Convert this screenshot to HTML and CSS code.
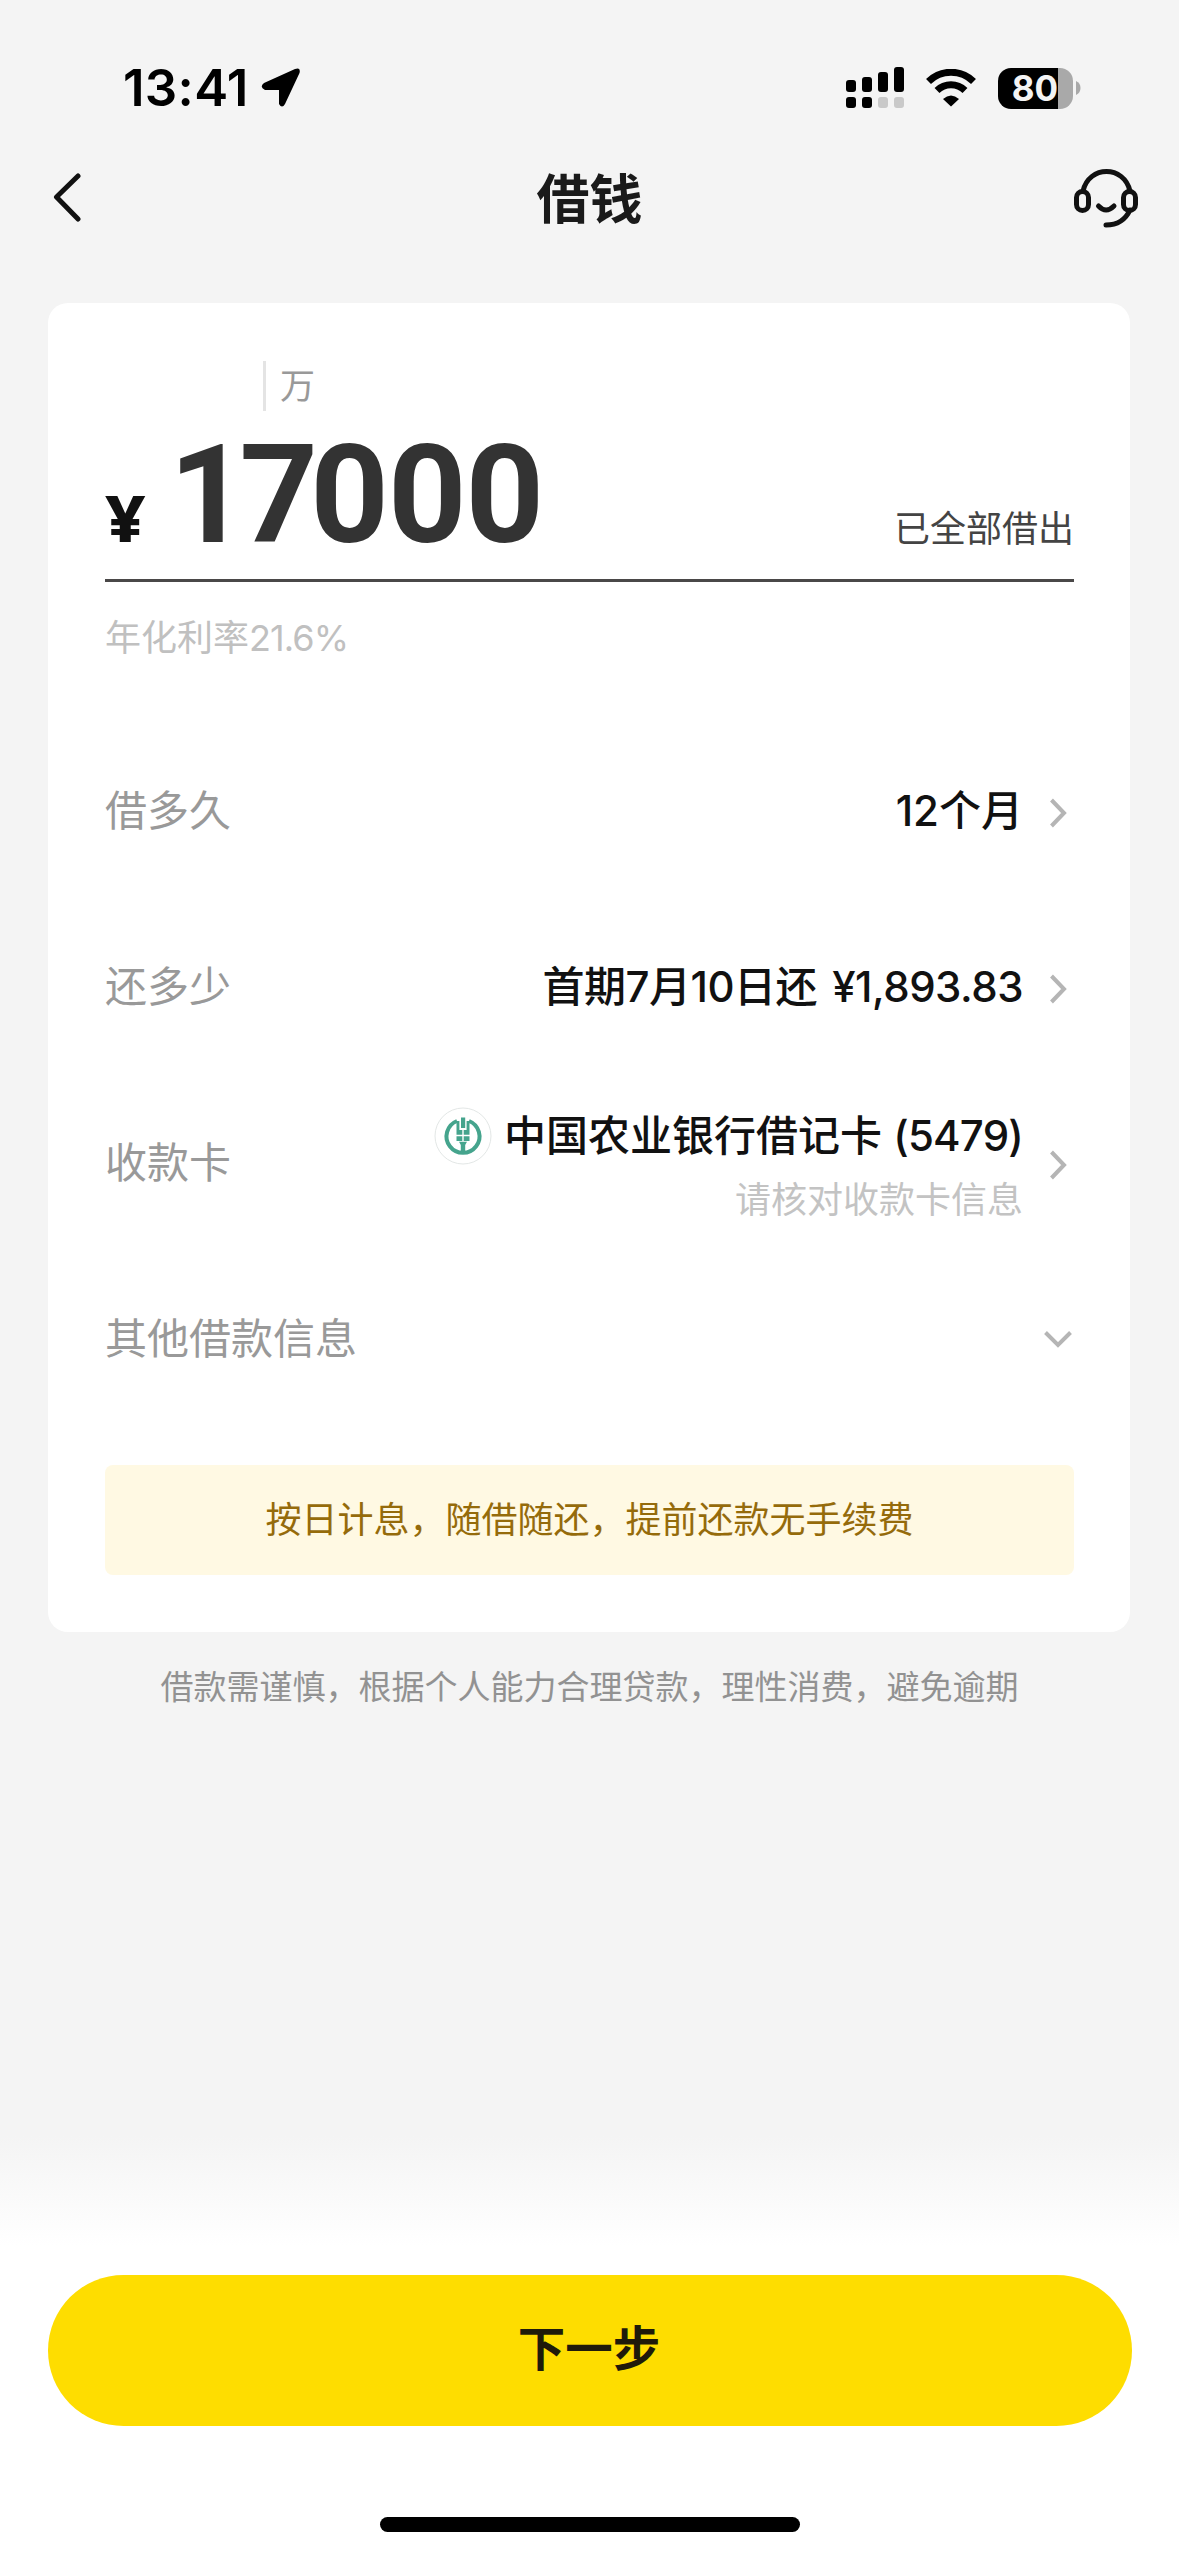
FILE: index.html
```html
<!DOCTYPE html>
<html lang="zh-CN">
<head>
<meta charset="utf-8">
<title>借钱</title>
<link rel="stylesheet" href="styles.css">
</head>
<body>
<div class="screen">
  <header class="status-bar">
    <div class="clock">
      <span class="time">13:41</span>
      <svg class="location" width="40" height="40" viewBox="0 0 40 40"><path d="M3 15 L34 1 Q40 -1 38.500 5 L24 36 Q21 41 18 36 V22 H4 Q-2 19 3 15Z"/></svg>
    </div>
    <div class="indicators">
      <svg width="58" height="42" viewBox="0 0 58 42">
        <rect x="0" y="13" width="10" height="12" rx="3"/><rect x="16" y="10" width="10" height="15" rx="3"/><rect x="32" y="5" width="10" height="20" rx="3"/><rect x="48" y="0" width="10" height="25" rx="3"/>
        <rect x="0" y="30" width="10" height="11" rx="3"/><rect x="16" y="30" width="10" height="11" rx="3"/><rect class="dim" x="32" y="30" width="10" height="11" rx="3"/><rect class="dim" x="48" y="30" width="10" height="11" rx="3"/>
      </svg>
      <svg class="wifi" width="50" height="38" viewBox="0 0 50 38">
        <path class="arc" d="M2.500 12.500 A32 32 0 0 1 47.500 12.500"/><path class="arc" d="M11 21.500 A20 20 0 0 1 39 21.500"/><path d="M17 30 Q25 23 33 30 L25 37.500Z"/>
      </svg>
      <div class="battery"><span class="level">80</span></div>
      <svg class="battery-tip" width="5" height="14" viewBox="0 0 5 14"><path class="tip" d="M0 0 Q4.500 2 4.500 7 T0 14Z"/></svg>
    </div>
  </header>

  <nav class="nav-bar">
    <svg class="back" width="28" height="50" viewBox="0 0 28 50"><path d="M25 3 L3.500 24 L25 46"/></svg>
    <h1 class="title">借钱</h1>
    <svg class="support" width="64" height="60" viewBox="0 0 64 60">
      <path d="M9 22 C15 -4 50 -4 56 22 M56 41 Q49 56 32 56"/><rect x="2.500" y="22.500" width="12" height="19" rx="6"/><rect x="49.500" y="22.500" width="12" height="19" rx="6"/><path d="M24.500 37 Q32 45 40 37"/>
    </svg>
  </nav>

  <main class="card">
    <div class="unit">万</div>
    <div class="amount-row">
      <span class="yen">¥</span>
      <span class="amount"><span class="kern">17</span>000</span>
      <span class="all-lent">已全部借出</span>
    </div>
    <p class="rate">年化利率<span class="percent">21.6%</span></p>

    <div class="row">
      <span class="label">借多久</span>
      <span class="value">12个月</span>
      <svg class="chevron" width="28" height="30" viewBox="0 0 28 30"><path d="M7.500 2 L20 15 L7.500 28"/></svg>
    </div>
    <div class="row">
      <span class="label">还多少</span>
      <span class="value"><span class="due">首期7月10日还</span> <span class="money">¥1,893.83</span></span>
      <svg class="chevron" width="28" height="30" viewBox="0 0 28 30"><path d="M7.500 2 L20 15 L7.500 28"/></svg>
    </div>
    <div class="row">
      <span class="label">收款卡</span>
      <div class="bank">
        <div class="bank-name">
          <svg class="bank-logo" width="58" height="58" viewBox="0 0 58 58">
            <circle class="halo" cx="29" cy="29" r="28"/>
            <path class="ring" d="M23 14 A16.500 16.500 0 1 0 35 14"/>
            <path class="ear" d="M27 10.500 H31.200 V21 H27Z M22.500 14 H25.400 V23 H28.300 V27.800 H22.500Z M35.500 14 H32.600 V23 H29.700 V27.800 H35.500Z M22.500 29.200 H28.300 V34 H22.500Z M29.700 29.200 H35.500 V34 H29.700Z M25 34.800 H33 L31.200 38 V46 H26.800 V38Z"/>
          </svg>
          <span class="value">中国农业银行借记卡 <span class="card-tail">(5479)</span></span>
        </div>
        <span class="hint">请核对收款卡信息</span>
      </div>
      <svg class="chevron" width="28" height="30" viewBox="0 0 28 30"><path d="M7.500 2 L20 15 L7.500 28"/></svg>
    </div>
    <div class="row">
      <span class="label">其他借款信息</span>
      <svg class="chevron down" width="30" height="18" viewBox="0 0 30 18"><path d="M2.500 2.500 L15 15 L27.500 2.500"/></svg>
    </div>

    <div class="notice">按日计息，随借随还，提前还款无手续费</div>
  </main>

  <p class="disclaimer">借款需谨慎，根据个人能力合理贷款，理性消费，避免逾期</p>

  <footer class="bottom">
    <button class="next">下一步</button>
    <div class="home-indicator"></div>
  </footer>
</div>
</body>
</html>
```

FILE: styles.css
```css
* { box-sizing: border-box; margin: 0; padding: 0; }

body {
  font-family: Inter, "Noto Sans CJK SC", sans-serif;
  background: #f4f4f4;
  color: #111;
}

.screen {
  width: 1179px;
  height: 2556px;
  display: flex;
  flex-direction: column;
  background: #f4f4f4;
  overflow: hidden;
}

svg { display: block; flex: none; }

.status-bar {
  height: 136px;
  padding: 40px 98px 0 123px;
  display: flex;
  align-items: center;
  justify-content: space-between;
}
.clock { display: flex; align-items: center; gap: 12px; }
.time { font-size: 51px; line-height: 60px; font-weight: 600; color: #000; letter-spacing: 0.3px; }
.indicators { display: flex; align-items: center; }
.dim { fill: #c9c9c9; }
.wifi { margin-left: 22px; }
.arc { fill: none; stroke: #000; stroke-width: 7; }
.battery {
  width: 75px;
  height: 41px;
  margin-left: 22px;
  padding-left: 7px;
  border-radius: 13px;
  background: linear-gradient(90deg, #000 60px, #a9a9a9 60px);
  display: flex;
  align-items: center;
}
.level { width: 60px; text-align: center; font-size: 35px; line-height: 41px; font-weight: 700; color: #f4f4f4; }
.battery-tip { margin-left: 3px; }
.tip { fill: #a9a9a9; }

.nav-bar {
  height: 167px;
  padding: 32px 41px 0 53px;
  display: flex;
  align-items: flex-start;
  justify-content: space-between;
}
.back { margin-top: 5px; fill: none; stroke: #111; stroke-width: 5; stroke-linecap: round; stroke-linejoin: round; }
.title { margin: 2px 0 0 24px; font-size: 53px; line-height: 60px; font-weight: 700; color: #1a1a1a; }
.support { margin-top: 1px; fill: none; stroke: #111; stroke-width: 5; stroke-linecap: round; }

.card {
  width: 1082px;
  height: 1329px;
  margin-left: 48px;
  padding: 58px 56px 0 57px;
  border-radius: 20px;
  background: #fff;
}
.unit {
  width: 60px;
  height: 50px;
  margin-left: 158px;
  padding-left: 14px;
  border-left: 3px solid #e4e4e4;
  font-size: 35px;
  line-height: 50px;
  color: #999;
}
.amount-row {
  height: 171px;
  padding-bottom: 25px;
  display: flex;
  align-items: baseline;
  border-bottom: 3px solid #4a4848;
}
.yen {
  width: 64px;
  font-family: "Noto Sans", sans-serif;
  font-size: 65px;
  line-height: 150px;
  font-weight: 800;
  transform: scaleX(1.08);
  transform-origin: left;
}
.amount {
  font-family: Roboto, sans-serif;
  font-size: 137px;
  line-height: 168px;
  font-weight: 700;
  letter-spacing: -0.9px;
  color: #333;
}
.kern { letter-spacing: -8px; }
.all-lent { margin-left: auto; font-size: 36px; line-height: 50px; color: #444; }
.rate { height: 141px; padding-top: 31px; font-size: 36px; line-height: 50px; color: #c0c0c0; }
.percent { letter-spacing: -0.9px; }

.row { height: 176px; display: flex; align-items: center; }
.label { margin-right: auto; font-size: 42px; line-height: 60px; color: #999; }
.value { font-size: 42px; line-height: 60px; font-weight: 500; color: #111; white-space: nowrap; }
.due { margin-right: 4px; letter-spacing: -0.5px; }
.money { letter-spacing: -0.5px; }
.card-tail { letter-spacing: -0.8px; }
.chevron { margin: 4px 2px 0 20px; fill: none; stroke: #b5b5b5; stroke-width: 4; }
.down { margin: 0 1px 0 0; }
.value, .hint { margin-right: 1px; }
.bank { padding-top: 10px; display: flex; flex-direction: column; align-items: flex-end; gap: 4px; }
.bank-name { display: flex; align-items: center; gap: 12px; }
.halo { fill: #fff; stroke: #e3e7e6; stroke-width: 1; }
.ring { fill: none; stroke: #45a48d; stroke-width: 4; }
.ear { fill: #45a48d; }
.hint { font-size: 36px; line-height: 60px; color: #c3c3c3; }

.notice {
  height: 110px;
  margin-top: 38px;
  border-radius: 8px;
  background: #fff9e3;
  font-size: 36px;
  line-height: 110px;
  color: #956b0b;
  text-align: center;
}

.disclaimer { padding-top: 30px; font-size: 33px; line-height: 50px; color: #929292; text-align: center; }

.bottom {
  height: 420px;
  margin-top: auto;
  padding-top: 139px;
  display: flex;
  flex-direction: column;
  align-items: center;
  background: linear-gradient(#f4f4f4, #fff 110px);
}
.next {
  width: 1084px;
  height: 151px;
  padding: 0 1px 11px 0;
  border: 0;
  border-radius: 76px;
  background: #fedd00;
  font: 700 47.5px "Noto Sans CJK SC", sans-serif;
  color: #1f1a0a;
}
.home-indicator { width: 420px; height: 15px; margin-top: 91px; border-radius: 8px; background: #000; }
```
